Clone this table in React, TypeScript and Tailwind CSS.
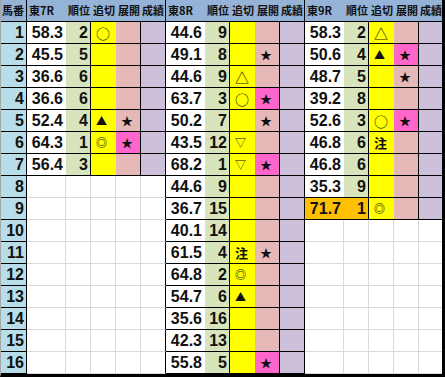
import React from 'react';

// s: 1 = ★, 2 = ★ on pink
type Row = { v: string; r: string; m?: string; s?: 1 | 2; hl?: boolean };

const races: { name: string; rows: Row[] }[] = [
  {
    name: '東7R',
    rows: [
      { v: '58.3', r: '2', m: '○' },
      { v: '45.5', r: '5' },
      { v: '36.6', r: '6' },
      { v: '36.6', r: '6' },
      { v: '52.4', r: '4', m: '▲', s: 1 },
      { v: '64.3', r: '1', m: '◎', s: 2 },
      { v: '56.4', r: '3' },
    ],
  },
  {
    name: '東8R',
    rows: [
      { v: '44.6', r: '9' },
      { v: '49.1', r: '8', s: 1 },
      { v: '44.6', r: '9', m: '△' },
      { v: '63.7', r: '3', m: '○', s: 2 },
      { v: '50.2', r: '7', s: 1 },
      { v: '43.5', r: '12', m: '▽' },
      { v: '68.2', r: '1', m: '▽', s: 2 },
      { v: '44.6', r: '9' },
      { v: '36.7', r: '15' },
      { v: '40.1', r: '14' },
      { v: '61.5', r: '4', m: '注', s: 1 },
      { v: '64.8', r: '2', m: '◎' },
      { v: '54.7', r: '6', m: '▲' },
      { v: '35.6', r: '16' },
      { v: '42.3', r: '13' },
      { v: '55.8', r: '5', s: 2 },
    ],
  },
  {
    name: '東9R',
    rows: [
      { v: '58.3', r: '2', m: '△' },
      { v: '50.6', r: '4', m: '▲', s: 2 },
      { v: '48.7', r: '5', s: 1 },
      { v: '39.2', r: '8' },
      { v: '52.6', r: '3', m: '○', s: 2 },
      { v: '46.8', r: '6', m: '注' },
      { v: '46.8', r: '6' },
      { v: '35.3', r: '9' },
      { v: '71.7', r: '1', m: '◎', hl: true },
    ],
  },
];

const markSize: Record<string, string> = {
  '○': 'text-[14px]',
  '△': 'text-[14px]',
  '▲': 'text-[11px]',
  '▽': 'text-[11px]',
  '◎': 'text-[11px] font-bold',
  '注': 'text-[13px] font-bold',
};

const num = "font-['Liberation_Sans',Arial,sans-serif] font-bold text-[16px]";
const jp = "font-['Noto_Sans_CJK_JP',sans-serif]";
const cell = 'h-full flex items-center overflow-hidden whitespace-nowrap shrink-0';

const Filled = ({ d, last }: { d: Row; last: boolean }) => (
  <>
    <div className={`${cell} ${num} w-[39px] justify-end pr-[3px] border-b border-black ${d.hl ? 'bg-[#ffc000]' : 'bg-white'}`}>
      {d.v}
    </div>
    <div className={`${cell} ${num} w-[25px] justify-end pr-[2px] border-r border-b border-black ${d.hl ? 'bg-[#ffc000]' : 'bg-[#d8e4bc]'}`}>
      {d.r}
    </div>
    <div className={`${cell} ${jp} w-[25px] pl-[5px] border-b border-black bg-[#ffff00]`}>
      {d.m && <span className={`leading-none ${markSize[d.m]}`}>{d.m}</span>}
    </div>
    <div className={`${cell} ${jp} w-[25px] pl-[5px] border-r border-b border-black ${d.s === 2 ? 'bg-[#ff66cc]' : 'bg-[#e6b8b7]'}`}>
      {d.s && <span className="leading-none text-[12px]">★</span>}
    </div>
    <div className={`${cell} bg-[#ccc0da] border-b border-black ${last ? 'w-[23px]' : 'w-[25px] border-r'}`} />
  </>
);

const Empty = ({ last }: { last: boolean }) => (
  <>
    <div className={`${cell} w-[39px] border-r border-b border-[#d9d9d9]`} />
    <div className={`${cell} w-[25px] border-r border-b border-[#d9d9d9]`} />
    <div className={`${cell} w-[25px] border-r border-b border-[#d9d9d9]`} />
    <div className={`${cell} w-[25px] border-r border-b border-[#d9d9d9]`} />
    {last ? (
      <div className={`${cell} w-[23px] border-b border-[#d9d9d9]`} />
    ) : (
      <div className={`${cell} w-[25px] border-b border-b-[#d9d9d9] border-r border-r-black`} />
    )}
  </>
);

export default function App() {
  return (
    <div className="w-[445px] h-[377px] bg-white border-r-[3px] border-b-[3px] border-black border-l border-l-[#a6a6a6] overflow-hidden text-[#111]">
      {/* 見出し */}
      <div className={`flex h-[22px] bg-[#95b3d7] border-b border-black ${jp} font-bold text-[11px]`}>
        <div className={`${cell} w-[26px] pl-[1px] border-r border-black`}>馬番</div>
        {races.map((race, g) => (
          <React.Fragment key={race.name}>
            <div className={`${cell} w-[39px] pl-[2px]`}>{race.name}</div>
            <div className={`${cell} w-[25px] pl-[2px]`}>順位</div>
            <div className={`${cell} w-[25px] pl-[2px]`}>追切</div>
            <div className={`${cell} w-[25px] pl-[2px]`}>展開</div>
            <div className={`${cell} pl-[1px] ${g === 2 ? 'w-[23px]' : 'w-[25px] border-r border-black'}`}>成績</div>
          </React.Fragment>
        ))}
      </div>

      {Array.from({ length: 16 }, (_, r) => (
        <div key={r} className="flex h-[22px]">
          <div className={`${cell} ${num} w-[26px] justify-end pr-[2px] bg-[#b7dee8] border-r border-b border-black`}>
            {r + 1}
          </div>
          {races.map((race, g) => {
            const d = race.rows[r];
            return d ? (
              <Filled key={race.name} d={d} last={g === 2} />
            ) : (
              <Empty key={race.name} last={g === 2} />
            );
          })}
        </div>
      ))}
    </div>
  );
}
